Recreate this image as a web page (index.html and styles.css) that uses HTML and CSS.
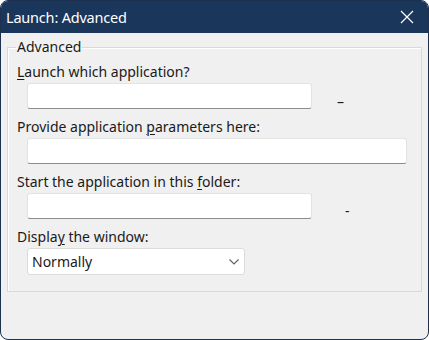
FILE: index.html
```html
<!DOCTYPE html>
<html>
<head>
<meta charset="utf-8">
<link rel="stylesheet" href="styles.css">
</head>
<body>
<div class="window">
  <div class="titlebar">
    <span class="title">Launch: Advanced</span>
    <svg class="close" width="14" height="14" viewBox="0 0 14 14"><path d="M1 1L13 13M13 1L1 13" stroke="#ffffff" stroke-width="1.2" fill="none"/></svg>
  </div>
  <div class="content">
    <fieldset class="group">
      <legend>Advanced</legend>
      <div class="label"><u>L</u>aunch which application?</div>
      <div class="row">
        <div class="input short"></div>
        <span class="dash">–</span>
      </div>
      <div class="label">Provide application <u>p</u>arameters here:</div>
      <div class="row">
        <div class="input long"></div>
      </div>
      <div class="label">Start the application in this <u>f</u>older:</div>
      <div class="row">
        <div class="input short"></div>
        <span class="dash small">-</span>
      </div>
      <div class="label">Displa<u>y</u> the window:</div>
      <div class="row tall">
        <div class="select"><span>Normally</span>
          <svg width="12" height="8" viewBox="0 0 12 8"><path d="M1.5 1.5L6 6L10.5 1.5" stroke="#606060" stroke-width="1.1" fill="none"/></svg>
        </div>
      </div>
    </fieldset>
  </div>
</div>
</body>
</html>
```
FILE: styles.css
```css
html, body {
  margin: 0;
  padding: 0;
  background: #ffffff;
}
body {
  font-family: "Noto Sans", "Open Sans", sans-serif;
  font-size: 14px;
  color: #1a1a1a;
}
.window {
  width: 429px;
  height: 340px;
  box-sizing: border-box;
  border: 1px solid #1c3150;
  border-radius: 8px;
  background: #f0f0f0;
  overflow: hidden;
  display: flex;
  flex-direction: column;
}
.titlebar {
  height: 32px;
  flex: none;
  background: #1b365b;
  display: flex;
  align-items: center;
  justify-content: space-between;
  padding: 0 14px 0 5px;
}
.title {
  color: #ffffff;
  font-size: 14.5px;
  letter-spacing: -0.2px;
}
.close {
  display: block;
}
.content {
  flex: 1;
  padding: 5px 6px 0 6px;
}
.group {
  margin: 0;
  border: 1px solid #d9d9d9;
  box-shadow: inset 1px 1px 0 #ffffff;
  padding: 7px 0 14px 9px;
  height: 254px;
  box-sizing: border-box;
}
.group legend {
  padding: 0 1px;
  margin-left: -1px;
  line-height: 18px;
  font-size: 14px;
}
.label {
  line-height: 18px;
  height: 18px;
  margin-bottom: 2px;
  white-space: nowrap;
}
.label u {
  text-decoration-thickness: 1px;
  text-underline-offset: 2px;
}
.row {
  display: flex;
  height: 26px;
  margin-bottom: 9px;
  padding-left: 10px;
}
.row.tall {
  height: 27px;
}
.input {
  height: 26px;
  box-sizing: border-box;
  background: #ffffff;
  border: 1px solid #e3e3e3;
  border-bottom: 1px solid #8c8c8c;
  border-radius: 3px;
}
.short { width: 285px; }
.long { width: 380px; }
.dash {
  align-self: flex-end;
  line-height: 14px;
  margin-left: 25px;
  font-size: 14px;
}
.dash.small {
  margin-left: 33px;
  margin-bottom: 1px;
}
.select {
  width: 218px;
  height: 27px;
  box-sizing: border-box;
  background: #ffffff;
  border: 1px solid #dcdcdc;
  border-radius: 3px;
  display: flex;
  align-items: center;
  justify-content: space-between;
  padding: 0 4px 0 4px;
  font-size: 14px;
}
```
